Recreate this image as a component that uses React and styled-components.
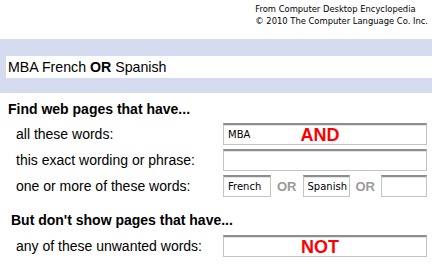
import React from 'react';
import styled, { createGlobalStyle } from 'styled-components';

const GlobalStyle = createGlobalStyle`
  html, body {
    margin: 0;
    padding: 0;
    background: #fff;
  }
  body {
    font-family: "Liberation Sans", Arial, sans-serif;
    color: #000;
  }
`;

const Page = styled.div`
  width: 432px;
  height: 271px;
  overflow: hidden;
`;

const Credit = styled.div`
  display: flex;
  justify-content: flex-end;
  padding: 3px 4px 0 0;
  height: 39px;
  box-sizing: border-box;
  font-family: "DejaVu Sans", Verdana, sans-serif;
  font-size: 8.4px;
  line-height: 12px;
  color: #000;
`;

const QueryBand = styled.div`
  background: #d5dcef;
  padding: 17px 0 15px 6px;
`;

const QueryBox = styled.div`
  background: #fff;
  height: 22px;
  line-height: 22px;
  padding-left: 2px;
  font-size: 14.2px;

  b {
    font-weight: bold;
  }
`;

const Section = styled.div`
  display: flex;
  flex-direction: column;
  gap: 4px;
  margin-top: ${(p) => p.$top}px;
`;

const Heading = styled.div`
  font-size: 14px;
  font-weight: bold;
  line-height: 16px;
  padding-left: ${(p) => p.$indent}px;
  margin-bottom: ${(p) => p.$after}px;
`;

const Row = styled.div`
  display: grid;
  grid-template-columns: 207px 204px;
  align-items: center;
  padding-left: 16px;
  height: 22px;
`;

const Label = styled.span`
  font-size: 14px;
  white-space: nowrap;
`;

const Field = styled.div`
  position: relative;
  box-sizing: border-box;
  height: 22px;
  width: ${(p) => (p.$width ? `${p.$width}px` : 'auto')};
  flex: ${(p) => (p.$grow ? 1 : 'none')};
  border: 1px solid #c4c4c4;
  border-top: 2px solid #8e8e8e;
  box-shadow: inset 0 1px 0 #e4e4e4;
  background: #fff;
  padding-left: 4px;
  font-family: "DejaVu Sans", Verdana, sans-serif;
  font-size: 10px;
  line-height: 19px;
`;

const Tag = styled.span`
  position: absolute;
  left: 0;
  right: 10px;
  top: 50%;
  transform: translateY(-50%);
  text-align: center;
  font-family: "Liberation Sans", Arial, sans-serif;
  font-weight: bold;
  font-size: 18px;
  line-height: 18px;
  color: #f00;
`;

const Choices = styled.div`
  display: flex;
  align-items: center;
  gap: 6px;
`;

const Or = styled.span`
  font-size: 13px;
  font-weight: bold;
  color: #9a9a9a;
`;

export default function App() {
  return (
    <>
      <GlobalStyle />
      <Page>
        <Credit>
          <div>
            <div>From Computer Desktop Encyclopedia</div>
            <div>© 2010 The Computer Language Co. Inc.</div>
          </div>
        </Credit>
        <QueryBand>
          <QueryBox>
            MBA French <b>OR</b> Spanish
          </QueryBox>
        </QueryBand>

        <Section $top={8}>
          <Heading $indent={8} $after={2}>Find web pages that have...</Heading>
          <Row>
            <Label>all these words:</Label>
            <Field>
              MBA
              <Tag>AND</Tag>
            </Field>
          </Row>
          <Row>
            <Label>this exact wording or phrase:</Label>
            <Field />
          </Row>
          <Row>
            <Label>one or more of these words:</Label>
            <Choices>
              <Field $width={48}>French</Field>
              <Or>OR</Or>
              <Field $width={47}>Spanish</Field>
              <Or>OR</Or>
              <Field $grow />
            </Choices>
          </Row>
        </Section>

        <Section $top={15}>
          <Heading $indent={11} $after={3}>But don't show pages that have...</Heading>
          <Row>
            <Label>any of these unwanted words:</Label>
            <Field>
              <Tag>NOT</Tag>
            </Field>
          </Row>
        </Section>
      </Page>
    </>
  );
}
